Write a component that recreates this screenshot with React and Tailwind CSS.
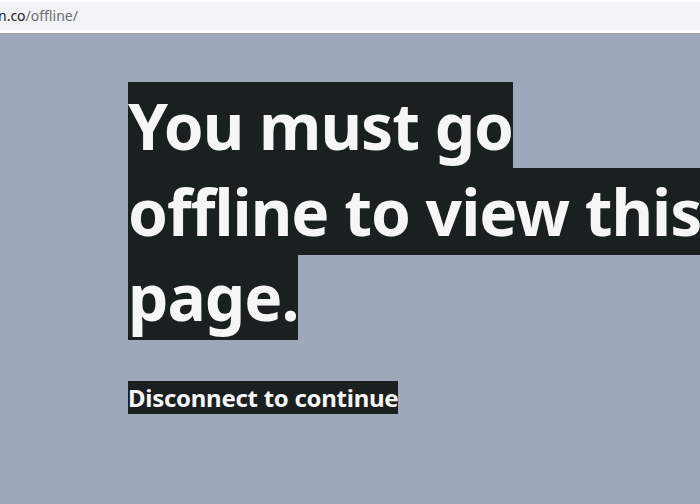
import React from "react";

export default function App() {
  return (
    <div className="w-[700px] h-[504px] overflow-hidden bg-[#9fa8bb] relative" style={{ fontFamily: '"Noto Sans", "Open Sans", sans-serif' }}>
      <div className="h-[34px] bg-white border-b border-[#a3a3a3] pt-[2px]">
        <div className="h-[28px] bg-[#f1f3f4] flex items-center">
          <span className="-ml-[2px] text-[14px] leading-none text-[#202124]">n.co</span>
          <span className="text-[14px] leading-none text-[#6b6f73]">/offline/</span>
        </div>
      </div>
      <div className="pl-32 w-[720px]">
        <h1 className="mt-[49px] w-[600px] text-[64px] leading-[85.7px] font-bold text-[#f6f6f6] tracking-[-1px]">
          <span className="bg-[#1a1f20]">You must go offline to view this page.</span>
        </h1>
        <p className="mt-[42px] text-[24px] leading-[32px] font-bold text-[#f6f6f6] tracking-[-0.28px]">
          <span className="bg-[#1a1f20]">Disconnect to continue</span>
        </p>
      </div>
    </div>
  );
}
